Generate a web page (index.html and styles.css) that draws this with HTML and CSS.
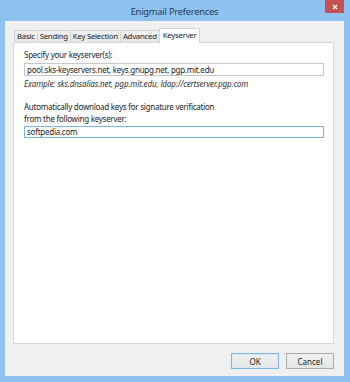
FILE: index.html
```html
<!DOCTYPE html>
<html lang="en">

<head>
    <meta charset="UTF-8">
    <meta name="viewport" content="width=device-width, initial-scale=1.0">
    <title>Enigmail Preferences</title>
    <link rel="stylesheet" href="styles.css">
</head>

<body>

    <div class="window">
        <div class="titlebar">
            <span class="title">Enigmail Preferences</span>
            <span class="close">
                <svg width="6" height="6" viewBox="0 0 6 6">
                    <path d="M1 1 L5 5 M5 1 L1 5" stroke="#fff" stroke-width="1.3" />
                </svg>
            </span>
        </div>

        <div class="client">
            <div class="tabs">
                <div class="tab">Basic</div>
                <div class="tab">Sending</div>
                <div class="tab">Key Selection</div>
                <div class="tab">Advanced</div>
                <div class="tab selected">Keyserver</div>
            </div>

            <div class="panel">
                <p class="label">Specify your keyserver(s):</p>
                <div class="field">pool.sks-keyservers.net, keys.gnupg.net, pgp.mit.edu</div>
                <p class="hint">Example: sks.dnsalias.net, pgp.mit.edu, ldap://certserver.pgp.com</p>

                <p class="label second">Automatically download keys for signature verification<br>from the following keyserver:</p>
                <div class="field focused">softpedia.com</div>
            </div>

            <div class="buttons">
                <button class="btn default">OK</button>
                <button class="btn">Cancel</button>
            </div>
        </div>
    </div>

</body>

</html>
```

FILE: styles.css
```css
body {
    margin: 0;
    font-family: "Noto Sans", "Open Sans", sans-serif;
    font-size: 8px;
    letter-spacing: -0.25px;
    color: #1e1e1e;
}

.window {
    display: flex;
    flex-direction: column;
    width: 350px;
    height: 382px;
    box-sizing: border-box;
    padding: 0 6px 6px 5px;
    background-color: #8ec3f1;
}

.titlebar {
    position: relative;
    height: 21px;
    display: flex;
    justify-content: center;
    align-items: center;
}

.title {
    font-size: 9.4px;
    color: #2b3a4a;
    margin-top: 2px;
}

.close {
    position: absolute;
    top: 0;
    right: 0;
    width: 19px;
    height: 13px;
    background-color: #c75050;
    display: flex;
    justify-content: center;
    align-items: center;
}

.client {
    flex: 1;
    display: flex;
    flex-direction: column;
    background-color: #f0f0f0;
    padding: 7px 10px 7px 8px;
}

.tabs {
    display: flex;
    align-items: flex-end;
    height: 14px;
    padding-left: 1px;
    position: relative;
    z-index: 1;
}

.tab {
    height: 12px;
    line-height: 11px;
    box-sizing: border-box;
    padding: 0 2px;
    border: 1px solid #d4d4d4;
    border-bottom: none;
    margin-right: -1px;
    background: linear-gradient(#f2f2f2, #e6e6e6);
    font-size: 7.8px;
}

.tab.selected {
    line-height: 13px;
    padding: 0 3px;
    background: #fff;
    margin-bottom: -1px;
    height: 15px;
}

.panel {
    flex: 1;
    background-color: #fff;
    border: 1px solid #d9d9d9;
    padding: 6px 9px 0 10px;
}

.label {
    margin: 0;
    line-height: 12px;
}

.label.second {
    margin-top: 11px;
}

.field {
    margin-top: 2px;
    height: 13px;
    line-height: 11px;
    box-sizing: border-box;
    border: 1px solid #c8c8c8;
    padding: 0 2px;
}

.field.focused {
    margin-top: 1px;
    height: 12px;
    line-height: 10px;
    border-color: #7eb4ea;
}

.hint {
    margin: 1px 0 0;
    font-style: italic;
    letter-spacing: -0.12px;
    line-height: 13px;
    color: #333;
}

.buttons {
    display: flex;
    justify-content: flex-end;
    gap: 7px;
    margin-top: 9px;
}

.btn {
    width: 48px;
    height: 16px;
    padding: 0;
    border: 1px solid #acacac;
    background: linear-gradient(#f0f0f0, #e5e5e5);
    font-family: inherit;
    font-size: 8px;
    color: #1e1e1e;
}

.btn.default {
    border-color: #7eb4ea;
    box-shadow: inset 0 0 0 1px #dbe9f7;
}
```
